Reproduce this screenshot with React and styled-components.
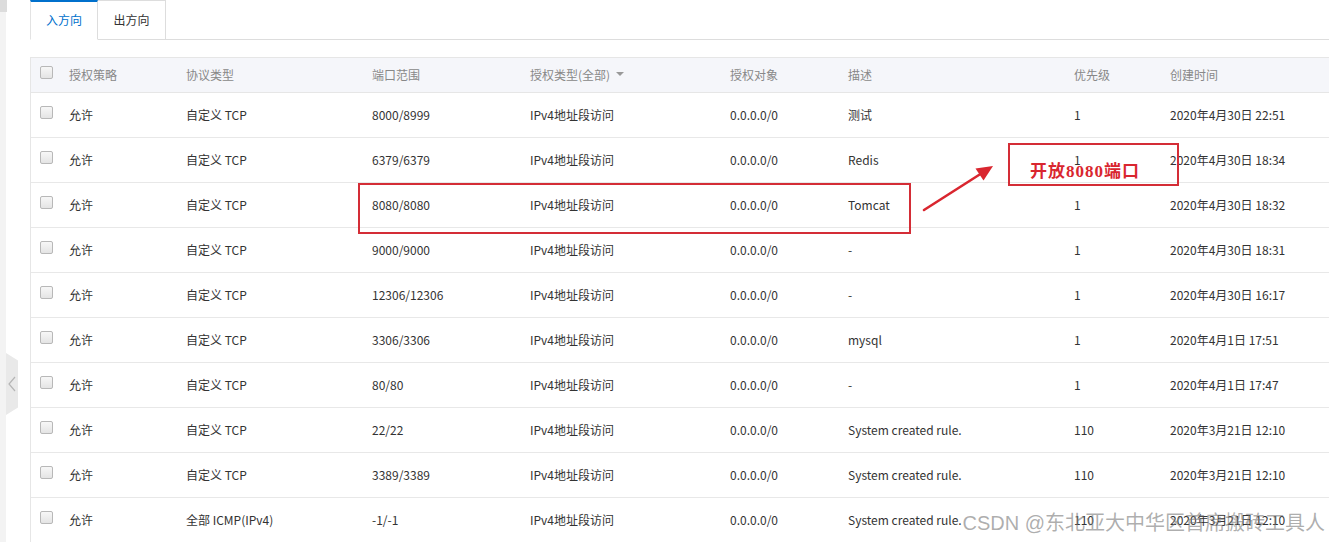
import styled, { createGlobalStyle } from "styled-components"

const GlobalStyle = createGlobalStyle`
    html, body {
        margin: 0;
        padding: 0;
        background: #fff;
        overflow: hidden;
    }
    body {
        font-family: "Noto Sans CJK SC", "Noto Sans", "Liberation Sans", sans-serif;
        font-size: 12px;
        color: #333;
    }
`

const rows = [
    ["8000/8999", "测试", "1", "2020年4月30日 22:51"],
    ["6379/6379", "Redis", "1", "2020年4月30日 18:34"],
    ["8080/8080", "Tomcat", "1", "2020年4月30日 18:32"],
    ["9000/9000", "-", "1", "2020年4月30日 18:31"],
    ["12306/12306", "-", "1", "2020年4月30日 16:17"],
    ["3306/3306", "mysql", "1", "2020年4月1日 17:51"],
    ["80/80", "-", "1", "2020年4月1日 17:47"],
    ["22/22", "System created rule.", "110", "2020年3月21日 12:10"],
    ["3389/3389", "System created rule.", "110", "2020年3月21日 12:10"],
    ["-1/-1", "System created rule.", "110", "2020年3月21日 12:10", "全部 ICMP(IPv4)"],
]

function App() {
    return (
        <Page>
            <GlobalStyle />
            <Rail>
                <RailTop />
                <Collapse>
                    <svg width="8" height="16" viewBox="0 0 8 16">
                        <path d="M7 1 L1 8 L7 15" fill="none" stroke="#b5b5b5" strokeWidth="1.2" />
                    </svg>
                </Collapse>
            </Rail>
            <Main>
                <TabBar>
                    <Tab active>入方向</Tab>
                    <Tab>出方向</Tab>
                    <TabFill />
                </TabBar>
                <Table>
                    <HeadRow>
                        <Cell><Check /></Cell>
                        <Cell>授权策略</Cell>
                        <Cell>协议类型</Cell>
                        <Cell>端口范围</Cell>
                        <Cell>
                            授权类型(全部)
                            <Caret />
                        </Cell>
                        <Cell>授权对象</Cell>
                        <Cell>描述</Cell>
                        <Cell>优先级</Cell>
                        <Cell>创建时间</Cell>
                    </HeadRow>
                    {rows.map((r, i) => (
                        <Row key={i}>
                            <Cell><Check /></Cell>
                            <Cell>允许</Cell>
                            <Cell>{r[4] || "自定义 TCP"}</Cell>
                            <Cell>{r[0]}</Cell>
                            <Cell>IPv4地址段访问</Cell>
                            <Cell>0.0.0.0/0</Cell>
                            <Cell>{r[1]}</Cell>
                            <Cell>{r[2]}</Cell>
                            <Cell>{r[3]}</Cell>
                        </Row>
                    ))}
                </Table>
            </Main>

            <MarkBox style={{ left: 358, top: 183, width: 553, height: 51 }} />
            <MarkBox style={{ left: 1008, top: 143, width: 171, height: 43 }}>
                <MarkText>开放8080端口</MarkText>
            </MarkBox>
            <Arrow width="1329" height="542" viewBox="0 0 1329 542">
                <line x1="924" y1="210" x2="982" y2="173" stroke="#d9262f" strokeWidth="2.6" strokeLinecap="round" />
                <polygon points="993,166 983.5,180.5 975.5,168.5" fill="#d9262f" />
            </Arrow>
            <Watermark>CSDN @东北亚大中华区首席搬砖工具人</Watermark>
        </Page>
    )
}

const Page = styled.div`
    position: relative;
    display: flex;
    width: 1329px;
    height: 542px;
    overflow: hidden;
`

const Rail = styled.div`
    position: relative;
    flex: 0 0 30px;
    &::before {
        content: "";
        position: absolute;
        left: 0;
        top: 0;
        bottom: 0;
        width: 6px;
        background: #f3f3f3;
    }
`

const RailTop = styled.div`
    position: absolute;
    left: 0;
    top: 0;
    width: 7px;
    height: 12px;
    background: #dcdcdc;
`

const Collapse = styled.div`
    position: absolute;
    left: 6px;
    top: 353px;
    width: 12px;
    height: 62px;
    background: #e9e9e9;
    clip-path: polygon(0 0, 100% 12%, 100% 88%, 0 100%);
    display: flex;
    align-items: center;
    justify-content: center;
`

const Main = styled.div`
    flex: 1;
    min-width: 0;
`

const TabBar = styled.div`
    display: flex;
    height: 40px;
`

const Tab = styled.div`
    width: 68px;
    box-sizing: border-box;
    display: flex;
    align-items: center;
    justify-content: center;
    padding-bottom: 2px;
    color: ${p => (p.active ? "#0070cc" : "#333")};
    border-top: ${p => (p.active ? "2px solid #0070cc" : "1px solid #ddd")};
    border-left: ${p => (p.active ? "1px solid #e3e3e3" : "none")};
    border-right: 1px solid #ddd;
    border-bottom: ${p => (p.active ? "1px solid transparent" : "1px solid #ddd")};
    background: #fff;
`

const TabFill = styled.div`
    flex: 1;
    border-bottom: 1px solid #ddd;
`

const Table = styled.div`
    margin-top: 17px;
    border-left: 1px solid #e6e6e6;
`

const cols = "38px 117px 186px 158px 200px 118px 226px 96px 1fr"

const HeadRow = styled.div`
    display: grid;
    grid-template-columns: ${cols};
    height: 36px;
    box-sizing: border-box;
    background: #f5f6fa;
    border-top: 1px solid #e6e6e6;
    border-bottom: 1px solid #e6e6e6;
    color: #888;
`

const Row = styled.div`
    display: grid;
    grid-template-columns: ${cols};
    height: 45px;
    box-sizing: border-box;
    border-bottom: 1px solid #e8e8e8;
`

const Cell = styled.div`
    display: flex;
    align-items: center;
    white-space: nowrap;
    padding-bottom: 2px;
    &:first-child {
        padding-left: 9px;
    }
`

const Check = styled.span`
    width: 11px;
    height: 11px;
    border: 1px solid #b8b8b8;
    border-radius: 2px;
    background: linear-gradient(#f7f7f7, #e4e4e4);
    margin-bottom: 4px;
`

const Caret = styled.span`
    width: 0;
    height: 0;
    margin-left: 6px;
    border-left: 4px solid transparent;
    border-right: 4px solid transparent;
    border-top: 4px solid #999;
`

const MarkBox = styled.div`
    position: absolute;
    box-sizing: border-box;
    border: 2px solid #d42d36;
    display: flex;
    align-items: center;
`

const MarkText = styled.span`
    margin-left: 20px;
    margin-top: 9px;
    color: #d9262f;
    font-family: "Liberation Serif", "Noto Sans CJK SC", serif;
    font-weight: bold;
    font-size: 17px;
    letter-spacing: 1px;
`

const Arrow = styled.svg`
    position: absolute;
    left: 0;
    top: 0;
    pointer-events: none;
`

const Watermark = styled.div`
    position: absolute;
    right: 4px;
    top: 507px;
    font-family: "Liberation Sans", "Noto Sans CJK SC", sans-serif;
    font-size: 20px;
    color: rgba(120, 120, 120, 0.6);
    white-space: nowrap;
`

export default App
